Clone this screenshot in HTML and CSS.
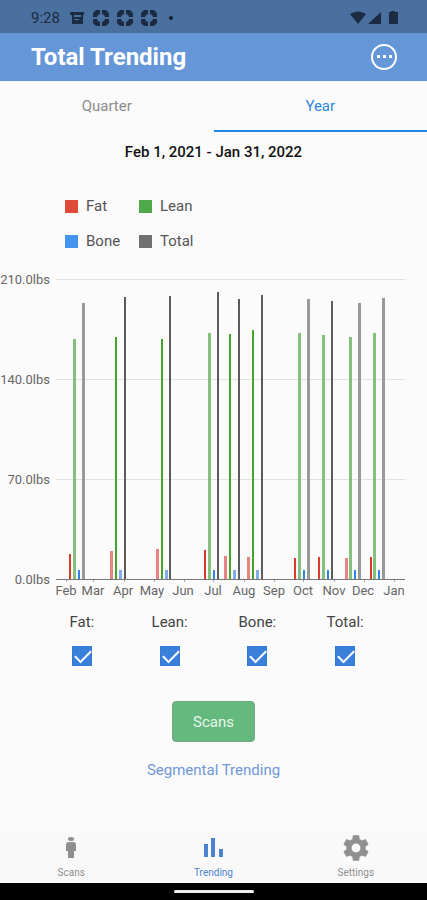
FILE: index.html
```html
<!DOCTYPE html>
<html lang="en">
<head>
    <meta charset="UTF-8">
    <meta name="viewport" content="width=device-width, initial-scale=1.0">
    <title>Total Trending</title>
    <link rel="stylesheet" href="styles.css">
</head>
<body>
    <div class="status-bar">
        <span class="time">9:28</span>
        <svg class="status-icon" viewBox="0 0 16 16" width="16" height="16">
            <path d="M1 2h14v3h-1v9H3V5H1z M5 5v2h7V5z M5 9v1h5V9z" fill="currentColor" fill-rule="evenodd"/>
        </svg>
        <svg class="status-icon" viewBox="0 0 16 16" width="16" height="16"><use href="#pinwheel"/></svg>
        <svg class="status-icon" viewBox="0 0 16 16" width="16" height="16"><use href="#pinwheel"/></svg>
        <svg class="status-icon" viewBox="0 0 16 16" width="16" height="16">
            <g id="pinwheel" fill="currentColor">
                <path d="M0 7V3l3-3h4v4L5 5 4 7z M9 0h4l3 3v4h-4l-1-2-2-1z M16 9v4l-3 3H9v-4l2-1 1-2z M7 16H3l-3-3V9h4l1 2 2 1z"/>
            </g>
        </svg>
        <span class="dot"></span>
        <svg class="signals" viewBox="0 0 48 14" width="48" height="14">
            <path d="M0 3q8-5 16 0L8 13z M31 1v12H18z M41 0h4v1h3v12h-9V1h2z" fill="currentColor"/>
        </svg>
    </div>

    <header class="header">
        <h1>Total Trending</h1>
        <button class="more" aria-label="More">
            <svg viewBox="0 0 28 28" width="28" height="28">
                <circle cx="14" cy="14" r="12" fill="none" stroke="#fff" stroke-width="2"/>
                <path d="M7 12h3v3H7z M13 12h3v3h-3z M19 12h3v3h-3z" fill="#fff"/>
            </svg>
        </button>
    </header>

    <div class="tabs">
        <button class="tab">Quarter</button>
        <button class="tab active">Year</button>
    </div>

    <main class="content">
        <h2>Feb 1, 2021 - Jan 31, 2022</h2>

        <ul class="legend">
            <li><span class="swatch fat"></span>Fat</li>
            <li><span class="swatch lean"></span>Lean</li>
            <li><span class="swatch bone"></span>Bone</li>
            <li><span class="swatch total"></span>Total</li>
        </ul>

        <svg class="chart" viewBox="0 0 427 340" role="img" aria-label="Weight by month">
            <path class="grid" d="M56 17h349v1H56z M56 117h349v1H56z M56 217h349v1H56z"/>
            <g class="y-labels">
                <text x="50" y="22">210.0lbs</text>
                <text x="50" y="122">140.0lbs</text>
                <text x="50" y="222">70.0lbs</text>
                <text x="50" y="322">0.0lbs</text>
            </g>
            <g id="bars"></g>
            <path class="axis" d="M56 317h349v1H56z"/>
            <path class="ticks" d="M66 318h1v2h-1z M93 318h1v2h-1z M124 318h1v2h-1z M154 318h1v2h-1z M184 318h1v2h-1z M213 318h1v2h-1z M244 318h1v2h-1z M274 318h1v2h-1z M303 318h1v2h-1z M334 318h1v2h-1z M364 318h1v2h-1z M394 318h1v2h-1z"/>
            <g class="x-labels">
                <text x="66" y="333">Feb</text>
                <text x="93" y="333">Mar</text>
                <text x="123" y="333">Apr</text>
                <text x="152" y="333">May</text>
                <text x="183" y="333">Jun</text>
                <text x="213" y="333">Jul</text>
                <text x="244" y="333">Aug</text>
                <text x="274" y="333">Sep</text>
                <text x="303" y="333">Oct</text>
                <text x="334" y="333">Nov</text>
                <text x="363" y="333">Dec</text>
                <text x="394" y="333">Jan</text>
            </g>
        </svg>

        <div class="filters">
            <label>Fat:<input type="checkbox" checked></label>
            <label>Lean:<input type="checkbox" checked></label>
            <label>Bone:<input type="checkbox" checked></label>
            <label>Total:<input type="checkbox" checked></label>
        </div>

        <button class="scans-btn">Scans</button>
        <a class="segmental" href="#">Segmental Trending</a>
    </main>

    <nav class="bottom-nav">
        <a href="#">
            <svg viewBox="0 0 28 28" width="28" height="28">
                <ellipse cx="14" cy="5" rx="3" ry="2" fill="currentColor"/>
                <path d="M12 8h4q3 0 3 3v6h-2v7h-6v-7H9v-6q0-3 3-3z" fill="currentColor"/>
            </svg>
            Scans
        </a>
        <a class="active" href="#">
            <svg viewBox="0 0 28 28" width="28" height="28">
                <path d="M5 10h4v13H5z M12 4h4v19h-4z M20 15h4v8h-4z" fill="currentColor"/>
            </svg>
            Trending
        </a>
        <a href="#">
            <svg viewBox="1 1 22 22" width="28" height="28">
                <path d="M19.43 12.98c.04-.32.07-.64.07-.98s-.03-.66-.07-.98l2.11-1.65c.19-.15.24-.42.12-.64l-2-3.46c-.12-.22-.39-.3-.61-.22l-2.49 1c-.52-.4-1.08-.73-1.69-.98l-.38-2.65C14.46 2.18 14.25 2 14 2h-4c-.25 0-.46.18-.49.42l-.38 2.65c-.61.25-1.17.59-1.69.98l-2.49-1c-.23-.09-.49 0-.61.22l-2 3.46c-.13.22-.07.49.12.64l2.11 1.65c-.04.32-.07.65-.07.98s.03.66.07.98l-2.11 1.65c-.19.15-.24.42-.12.64l2 3.46c.12.22.39.3.61.22l2.49-1c.52.4 1.08.73 1.69.98l.38 2.65c.03.24.24.42.49.42h4c.25 0 .46-.18.49-.42l.38-2.65c.61-.25 1.17-.59 1.69-.98l2.49 1c.23.09.49 0 .61-.22l2-3.46c.12-.22.07-.49-.12-.64l-2.11-1.65zM12 15.5c-1.93 0-3.5-1.57-3.5-3.5s1.57-3.5 3.5-3.5 3.5 1.57 3.5 3.5-1.57 3.5-3.5 3.5z" fill="currentColor"/>
            </svg>
            Settings
        </a>
    </nav>
    <div class="gesture-bar"><span></span></div>

    <script src="chart.js"></script>
</body>
</html>
```
FILE: styles.css
```css
* {
    box-sizing: border-box;
}
body {
    margin: 0;
    min-height: 100vh;
    display: flex;
    flex-direction: column;
    background: #fbfbfb;
    color: #444;
    font-family: Roboto, sans-serif;
    font-size: 15px;
}
button {
    border: none;
    background: none;
    padding: 0;
    font: inherit;
    cursor: pointer;
}
a {
    text-decoration: none;
}
.status-bar {
    display: flex;
    align-items: center;
    gap: 8px;
    height: 33px;
    padding: 2px 29px 0 31px;
    background: #4a709f;
    color: #1b2b42;
}
.time {
    width: 30px;
}
.status-icon {
    flex: none;
}
.dot {
    width: 4px;
    height: 4px;
    margin-left: 4px;
    border-radius: 50%;
    background: #14202f;
}
.signals {
    margin-left: auto;
}
.header {
    display: flex;
    align-items: center;
    justify-content: space-between;
    height: 48px;
    padding: 0 29px 0 31px;
    background: #6496d8;
    color: #fff;
}
.header h1 {
    margin: 0;
    font-size: 24px;
    font-weight: 700;
}
.more {
    height: 28px;
}
.tabs {
    display: flex;
    height: 51px;
}
.tab {
    flex: 1;
    border-bottom: 2px solid transparent;
    color: #8c8c8c;
}
.tab.active {
    border-color: #1b87e5;
    color: #2f86e0;
}
.content {
    flex: 1;
    display: flex;
    flex-direction: column;
    align-items: center;
}
.content h2 {
    margin: 10px 0 34px;
    font-size: 15px;
    font-weight: 500;
    line-height: 20px;
    color: #111;
}
.legend {
    display: grid;
    grid-template-columns: 74px 74px;
    row-gap: 15px;
    align-self: flex-start;
    margin: 0 0 11px;
    padding: 0 0 0 65px;
    list-style: none;
    line-height: 20px;
    color: #555;
}
.legend li {
    display: flex;
    align-items: center;
    gap: 8px;
}
.swatch {
    width: 13px;
    height: 13px;
}
.swatch.fat {
    background: #e04b39;
}
.swatch.lean {
    background: #4fa84a;
}
.swatch.bone {
    background: #4493ee;
}
.swatch.total {
    background: #707070;
}
.chart {
    width: 100%;
    font-size: 13px;
    fill: #666;
}
.y-labels {
    text-anchor: end;
}
.x-labels {
    text-anchor: middle;
}
.grid {
    fill: #e2e2e2;
}
.axis {
    fill: #777;
}
.ticks {
    fill: #aaa;
}
.bar-fat {
    fill: #d83a2b;
}
.bar-lean {
    fill: #45a52a;
}
.bar-bone {
    fill: #2f86e6;
}
.bar-total {
    fill: #5c5c5c;
}
.soft.bar-fat {
    fill: #e68580;
}
.soft.bar-lean {
    fill: #84c07e;
}
.soft.bar-bone {
    fill: #7fabef;
}
.soft.bar-total {
    fill: #999;
}
.filters {
    display: grid;
    grid-template-columns: repeat(4, 1fr);
    align-self: stretch;
    margin: 10px 38px 35px;
}
.filters label {
    display: flex;
    flex-direction: column;
    align-items: center;
    gap: 14px;
    line-height: 20px;
}
.filters input {
    position: relative;
    appearance: none;
    width: 20px;
    height: 20px;
    margin: 0;
    border: 1px solid #2f7bd6;
    background: #fff;
}
.filters input:checked {
    background: #3a80db;
}
.filters input:checked::after {
    content: "";
    position: absolute;
    left: 2px;
    top: 3px;
    width: 14px;
    height: 7px;
    border: solid #fff;
    border-width: 0 0 2px 2px;
    transform: rotate(-45deg);
}
.scans-btn {
    width: 83px;
    height: 41px;
    border: 1px solid #72a982;
    border-radius: 4px;
    background: #65b97e;
    color: #e8f7ec;
}
.segmental {
    margin-top: 18px;
    line-height: 20px;
    color: #6f97d8;
}
.bottom-nav {
    display: flex;
    height: 51px;
    background: #f9f9f9;
}
.bottom-nav a {
    flex: 1;
    display: flex;
    flex-direction: column;
    align-items: center;
    gap: 5px;
    padding-top: 2px;
    font-size: 10px;
    color: #8f8f8f;
}
.bottom-nav a.active {
    color: #4a84d3;
}
.gesture-bar {
    display: flex;
    align-items: center;
    justify-content: center;
    height: 17px;
    background: #000;
}
.gesture-bar span {
    width: 80px;
    height: 3px;
    border-radius: 2px;
    background: #eee;
}
```
FILE: chart.js
```js
// [x, top, soft] for each bar, one row per scan
const scans = [
    { fat: [69, 292], lean: [73, 77, 1], bone: [78, 308], total: [82, 41, 1] },
    { fat: [110, 289, 1], lean: [115, 75], bone: [119, 308, 1], total: [124, 35] },
    { fat: [156, 287, 1], lean: [161, 77], bone: [165, 308, 1], total: [169, 34] },
    { fat: [204, 288], lean: [208, 71, 1], bone: [213, 308], total: [217, 30] },
    { fat: [224, 294, 1], lean: [229, 72], bone: [233, 308, 1], total: [238, 37] },
    { fat: [247, 295, 1], lean: [252, 68], bone: [256, 308, 1], total: [261, 33] },
    { fat: [294, 296], lean: [298, 71, 1], bone: [303, 308], total: [307, 37, 1] },
    { fat: [318, 295], lean: [322, 73, 1], bone: [327, 308], total: [331, 39] },
    { fat: [345, 296, 1], lean: [349, 75, 1], bone: [354, 308], total: [358, 41, 1] },
    { fat: [370, 295], lean: [373, 71, 1], bone: [378, 308], total: [382, 36, 1] }
];

const baseline = 317;
const bars = document.getElementById('bars');

scans.forEach(scan => {
    Object.entries(scan).forEach(([name, [x, top, soft]]) => {
        const rect = document.createElementNS('http://www.w3.org/2000/svg', 'rect');
        rect.setAttribute('class', `bar-${name}${soft ? ' soft' : ''}`);
        rect.setAttribute('x', x);
        rect.setAttribute('y', top);
        rect.setAttribute('width', soft ? 3 : 2);
        rect.setAttribute('height', baseline - top);
        bars.appendChild(rect);
    });
});
```
